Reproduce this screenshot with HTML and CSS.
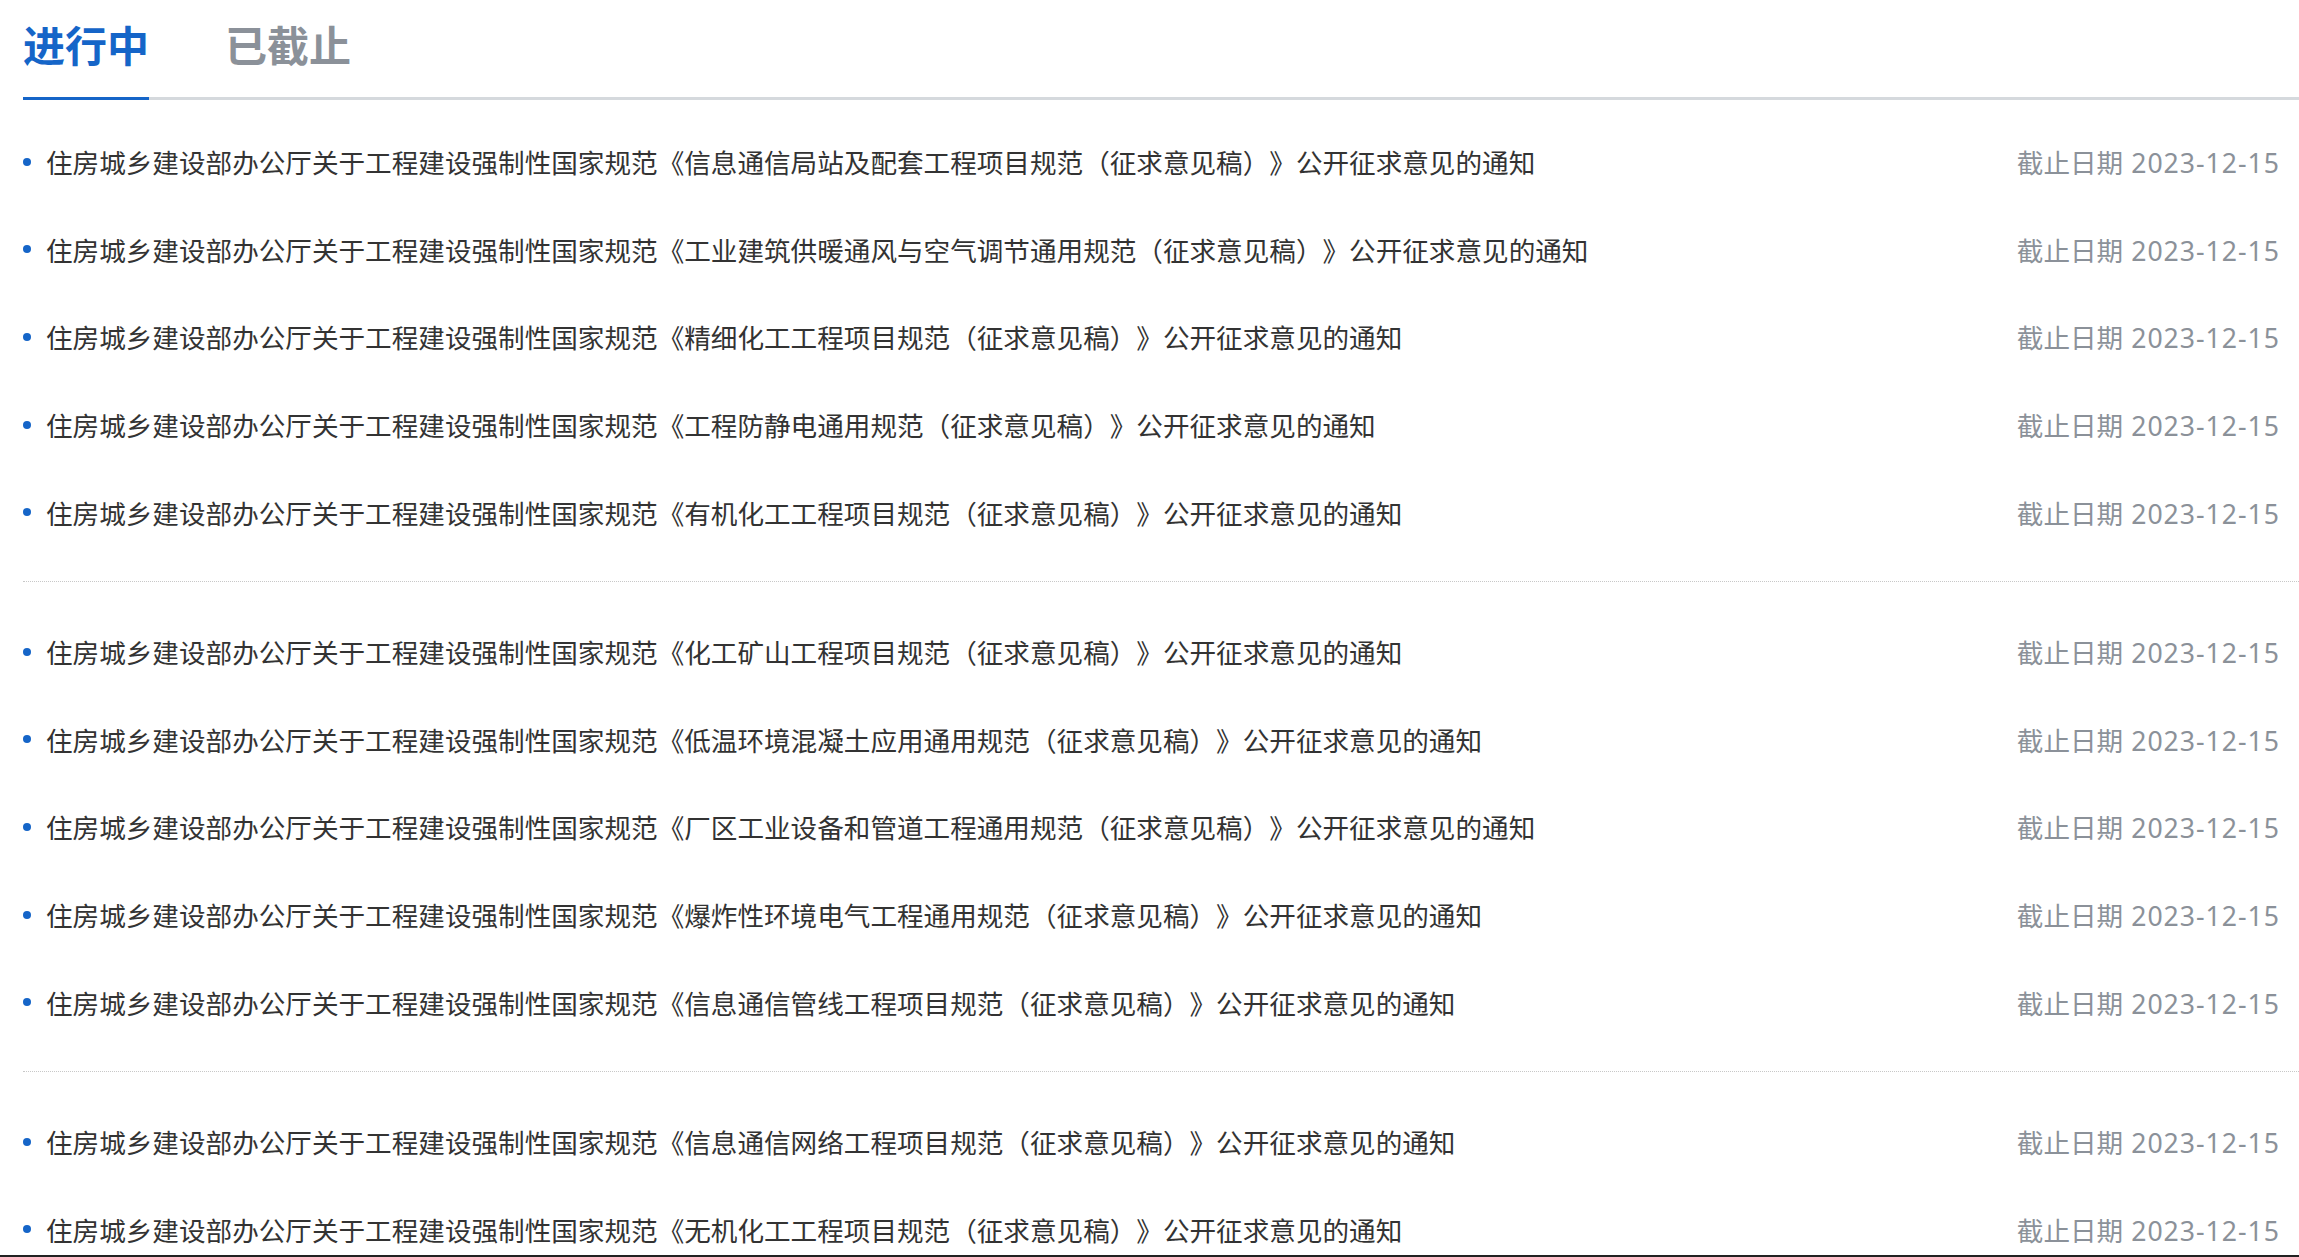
FILE: index.html
```html
<!DOCTYPE html>
<html lang="zh-CN">
<head>
    <meta charset="UTF-8">
    <meta name="viewport" content="width=device-width, initial-scale=1.0">
    <title>征求意见</title>
    <link rel="stylesheet" href="styles.css">
</head>
<body>
    <div class="page">
        <div class="tabs">
            <div class="tab active">进行中</div>
            <div class="tab">已截止</div>
        </div>

        <ul class="notice-list">
            <li><span class="title">住房城乡建设部办公厅关于工程建设强制性国家规范《信息通信局站及配套工程项目规范（征求意见稿）》公开征求意见的通知</span><span class="date">截止日期 <span class="num">2023-12-15</span></span></li>
            <li><span class="title">住房城乡建设部办公厅关于工程建设强制性国家规范《工业建筑供暖通风与空气调节通用规范（征求意见稿）》公开征求意见的通知</span><span class="date">截止日期 <span class="num">2023-12-15</span></span></li>
            <li><span class="title">住房城乡建设部办公厅关于工程建设强制性国家规范《精细化工工程项目规范（征求意见稿）》公开征求意见的通知</span><span class="date">截止日期 <span class="num">2023-12-15</span></span></li>
            <li><span class="title">住房城乡建设部办公厅关于工程建设强制性国家规范《工程防静电通用规范（征求意见稿）》公开征求意见的通知</span><span class="date">截止日期 <span class="num">2023-12-15</span></span></li>
            <li><span class="title">住房城乡建设部办公厅关于工程建设强制性国家规范《有机化工工程项目规范（征求意见稿）》公开征求意见的通知</span><span class="date">截止日期 <span class="num">2023-12-15</span></span></li>
        </ul>

        <ul class="notice-list">
            <li><span class="title">住房城乡建设部办公厅关于工程建设强制性国家规范《化工矿山工程项目规范（征求意见稿）》公开征求意见的通知</span><span class="date">截止日期 <span class="num">2023-12-15</span></span></li>
            <li><span class="title">住房城乡建设部办公厅关于工程建设强制性国家规范《低温环境混凝土应用通用规范（征求意见稿）》公开征求意见的通知</span><span class="date">截止日期 <span class="num">2023-12-15</span></span></li>
            <li><span class="title">住房城乡建设部办公厅关于工程建设强制性国家规范《厂区工业设备和管道工程通用规范（征求意见稿）》公开征求意见的通知</span><span class="date">截止日期 <span class="num">2023-12-15</span></span></li>
            <li><span class="title">住房城乡建设部办公厅关于工程建设强制性国家规范《爆炸性环境电气工程通用规范（征求意见稿）》公开征求意见的通知</span><span class="date">截止日期 <span class="num">2023-12-15</span></span></li>
            <li><span class="title">住房城乡建设部办公厅关于工程建设强制性国家规范《信息通信管线工程项目规范（征求意见稿）》公开征求意见的通知</span><span class="date">截止日期 <span class="num">2023-12-15</span></span></li>
        </ul>

        <ul class="notice-list">
            <li><span class="title">住房城乡建设部办公厅关于工程建设强制性国家规范《信息通信网络工程项目规范（征求意见稿）》公开征求意见的通知</span><span class="date">截止日期 <span class="num">2023-12-15</span></span></li>
            <li><span class="title">住房城乡建设部办公厅关于工程建设强制性国家规范《无机化工工程项目规范（征求意见稿）》公开征求意见的通知</span><span class="date">截止日期 <span class="num">2023-12-15</span></span></li>
        </ul>
    </div>
</body>
</html>
```

FILE: styles.css
```css
body {
    margin: 0;
    padding: 0;
    background-color: #fff;
    font-family: "Noto Sans CJK SC", "Noto Sans", sans-serif;
    text-spacing-trim: space-all;
}

.page {
    height: 100vh;
    box-sizing: border-box;
    padding-left: 23px;
    overflow: hidden;
    border-bottom: 2px solid #222;
}

.tabs {
    display: flex;
    gap: 76px;
    padding-top: 14px;
    border-bottom: 3px solid #d5d9dd;
}

.tab {
    font-size: 42px;
    font-weight: bold;
    line-height: 60px;
    padding-bottom: 23px;
    margin-bottom: -3px;
    color: #8b9199;
    border-bottom: 3px solid transparent;
    cursor: pointer;
}

.tab.active {
    color: #1565c8;
    border-bottom-color: #1565c8;
}

.notice-list {
    list-style: none;
    margin: 0;
    padding: 26px 0 25px;
}

.notice-list:first-of-type {
    padding-top: 18px;
}

.notice-list + .notice-list {
    border-top: 1px dotted #c8c8c8;
}

.notice-list li {
    display: flex;
    align-items: center;
    height: 87.6px;
    font-size: 26.6px;
    padding-right: 19px;
}

.notice-list li::before {
    content: "";
    width: 8px;
    height: 8px;
    border-radius: 50%;
    background-color: #1565c8;
    margin-right: 15px;
    flex-shrink: 0;
}

.title {
    flex: 1;
    color: #333;
    white-space: nowrap;
    overflow: hidden;
}

.date {
    color: #8b9199;
    white-space: nowrap;
    word-spacing: 2px;
}

.num {
    font-family: "Noto Sans", sans-serif;
    letter-spacing: 1px;
}
```
